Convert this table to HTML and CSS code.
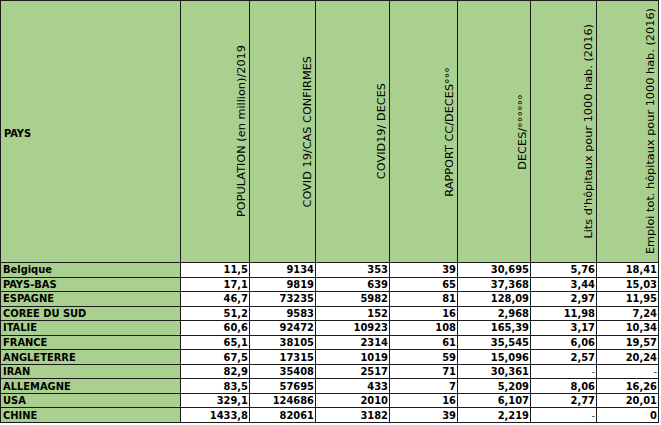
FILE: index.html
```html
<!DOCTYPE html>
<html lang="fr">
<head>
<meta charset="utf-8">
<title>Tableau COVID-19</title>
<link rel="stylesheet" href="styles.css">
</head>
<body>
<table class="grid">
  <colgroup>
    <col class="c0"><col class="c1"><col class="c2"><col class="c3"><col class="c4"><col class="c5"><col class="c6"><col class="c7">
  </colgroup>
  <thead>
    <tr class="head">
      <th class="pays-h"><div class="hbox-left">PAYS</div></th>
      <th><div class="hbox"><span class="vt">POPULATION (en million)/2019</span></div></th>
      <th><div class="hbox"><span class="vt">COVID 19/CAS CONFIRMES</span></div></th>
      <th><div class="hbox"><span class="vt">COVID19/ DECES</span></div></th>
      <th><div class="hbox"><span class="vt">RAPPORT CC/DECES°°°</span></div></th>
      <th><div class="hbox"><span class="vt">DECES/°°°°°°</span></div></th>
      <th><div class="hbox"><span class="vt">Lits d'hôpitaux pour 1000 hab. (2016)</span></div></th>
      <th><div class="hbox"><span class="vt">Emploi tot. hôpitaux pour 1000 hab. (2016)</span></div></th>
    </tr>
  </thead>
  <tbody>
    <tr><td class="pays">Belgique</td><td>11,5</td><td>9134</td><td>353</td><td>39</td><td>30,695</td><td>5,76</td><td>18,41</td></tr>
    <tr><td class="pays">PAYS-BAS</td><td>17,1</td><td>9819</td><td>639</td><td>65</td><td>37,368</td><td>3,44</td><td>15,03</td></tr>
    <tr><td class="pays">ESPAGNE</td><td>46,7</td><td>73235</td><td>5982</td><td>81</td><td>128,09</td><td>2,97</td><td>11,95</td></tr>
    <tr><td class="pays">COREE DU SUD</td><td>51,2</td><td>9583</td><td>152</td><td>16</td><td>2,968</td><td>11,98</td><td>7,24</td></tr>
    <tr><td class="pays">ITALIE</td><td>60,6</td><td>92472</td><td>10923</td><td>108</td><td>165,39</td><td>3,17</td><td>10,34</td></tr>
    <tr><td class="pays">FRANCE</td><td>65,1</td><td>38105</td><td>2314</td><td>61</td><td>35,545</td><td>6,06</td><td>19,57</td></tr>
    <tr><td class="pays">ANGLETERRE</td><td>67,5</td><td>17315</td><td>1019</td><td>59</td><td>15,096</td><td>2,57</td><td>20,24</td></tr>
    <tr><td class="pays">IRAN</td><td>82,9</td><td>35408</td><td>2517</td><td>71</td><td>30,361</td><td class="dash">-</td><td class="dash">-</td></tr>
    <tr><td class="pays">ALLEMAGNE</td><td>83,5</td><td>57695</td><td>433</td><td>7</td><td>5,209</td><td>8,06</td><td>16,26</td></tr>
    <tr><td class="pays">USA</td><td>329,1</td><td>124686</td><td>2010</td><td>16</td><td>6,107</td><td>2,77</td><td>20,01</td></tr>
    <tr><td class="pays">CHINE</td><td>1433,8</td><td>82061</td><td>3182</td><td>39</td><td>2,219</td><td class="dash">-</td><td>0</td></tr>
  </tbody>
</table>
</body>
</html>
```

FILE: styles.css
```css
html, body {
  margin: 0;
  padding: 0;
  background: #ffffff;
}

.grid {
  border-collapse: collapse;
  table-layout: fixed;
  width: 658px;
  font-family: "DejaVu Sans Condensed", "DejaVu Sans", sans-serif;
  font-size: 11px;
  color: #000;
}

.c0 { width: 180px; }
.c1 { width: 69px; }
.c2 { width: 66px; }
.c3 { width: 74px; }
.c4 { width: 68px; }
.c5 { width: 73px; }
.c6 { width: 66px; }
.c7 { width: 62px; }

.grid th,
.grid td {
  border: 1px solid #1b1b1b;
  padding: 0;
  overflow: hidden;
  white-space: nowrap;
}

.head th {
  background: #a9d08e;
  height: 261px;
  font-weight: normal;
}

.hbox {
  height: 261px;
  display: flex;
  align-items: center;
  justify-content: flex-end;
  padding-right: 1px;
}

.hbox-left {
  height: 261px;
  display: flex;
  align-items: center;
  justify-content: flex-start;
  padding-left: 3px;
  padding-top: 3px;
  box-sizing: border-box;
  font-weight: bold;
}

.vt {
  writing-mode: vertical-rl;
  transform: rotate(180deg);
  line-height: 13px;
  font-family: "DejaVu Sans", sans-serif;
  font-size: 11.3px;
}

.grid tbody tr {
  height: 14.55px;
}

.grid tbody td {
  height: 13.5px;
  line-height: 13px;
  text-align: right;
  font-weight: bold;
  padding-right: 1px;
  background: #ffffff;
}

.grid tbody td.pays {
  background: #a9d08e;
  text-align: left;
  padding-left: 2px;
  padding-right: 0;
}

.grid tbody td.dash {
  font-weight: normal;
  color: #444;
}
```
